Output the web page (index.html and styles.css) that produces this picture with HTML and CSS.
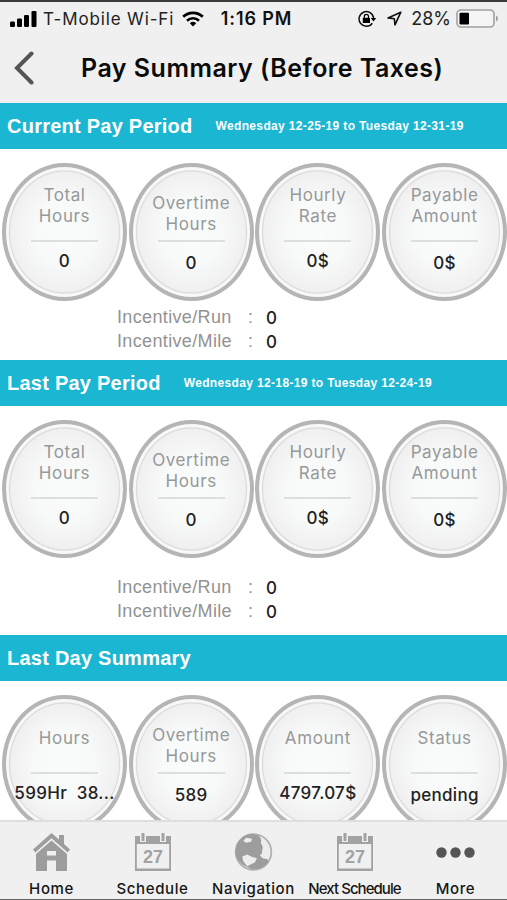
FILE: index.html
```html
<!DOCTYPE html>
<html lang="en">
<head>
    <meta charset="UTF-8">
    <meta name="viewport" content="width=device-width, initial-scale=1.0">
    <title>Pay Summary</title>
    <link rel="stylesheet" href="styles.css">
</head>
<body>
    <div class="app">
        <div class="status-bar">
            <div class="status-left">
                <svg class="signal" width="27" height="16" viewBox="0 0 27 16">
                    <rect x="0" y="10.5" width="5" height="5.5" rx="1.2"/>
                    <rect x="7" y="7.5" width="5" height="8.5" rx="1.2"/>
                    <rect x="14" y="4" width="5" height="12" rx="1.2"/>
                    <rect x="21.5" y="0" width="5" height="16" rx="1.2"/>
                </svg>
                <span class="carrier">T-Mobile Wi-Fi</span>
                <svg class="wifi" width="22" height="16" viewBox="0 0 22 16">
                    <path d="M1.2 5.8a14 14 0 0 1 19.6 0" fill="none" stroke="#000" stroke-width="2.8"/>
                    <path d="M5 9.7a8.6 8.6 0 0 1 12 0" fill="none" stroke="#000" stroke-width="2.6"/>
                    <path d="M7.8 12.3a4.7 4.7 0 0 1 6.4 0L11 15.6z"/>
                </svg>
            </div>
            <div class="clock">1:16 PM</div>
            <div class="status-right">
                <svg width="19" height="18" viewBox="0 0 19 18">
                    <path d="M14.3 13.2A7.3 7.3 0 1 1 15.6 8" fill="none" stroke="#111" stroke-width="1.5"/>
                    <path d="M12.8 8h5.4l-2.7 3.4z"/>
                    <rect x="4.8" y="7.8" width="7.2" height="5.2" rx=".6"/>
                    <path d="M6.3 8V6.5a2.1 2.1 0 0 1 4.2 0V8" fill="none" stroke="#000" stroke-width="1.2"/>
                </svg>
                <svg class="location" width="15" height="15" viewBox="0 0 15 15">
                    <path d="M13.8 1.2L1 6.9l6.3.8.7 6.2z" fill="none" stroke="#111" stroke-width="1.6" stroke-linejoin="round"/>
                </svg>
                <span class="percent">28%</span>
                <svg class="battery" width="43" height="19" viewBox="0 0 43 19">
                    <rect x="1" y="1" width="37" height="17" rx="4" fill="#f5f5f5" stroke="#a0a0a0" stroke-width="1.6"/>
                    <rect x="3.5" y="3.8" width="9.5" height="11.6" rx="1"/>
                    <path d="M40 6.5c2.6.8 2.6 5.2 0 6z" fill="#a0a0a0"/>
                </svg>
            </div>
        </div>

        <div class="nav-bar">
            <svg class="back" width="21" height="34" viewBox="0 0 21 34">
                <path d="M18.5 2.5L4 17l14.5 14.5" fill="none" stroke="#555" stroke-width="4" stroke-linecap="round"/>
            </svg>
            <h1>Pay Summary (Before Taxes)</h1>
        </div>

        <div class="content">
            <div class="section-head">
                <h2>Current Pay Period</h2>
                <span class="dates">Wednesday 12-25-19 to Tuesday 12-31-19</span>
            </div>
            <div class="circles">
                <div class="circle"><div class="label">Total<br>Hours</div><div class="value">0</div></div>
                <div class="circle low"><div class="label">Overtime<br>Hours</div><div class="value">0</div></div>
                <div class="circle"><div class="label">Hourly<br>Rate</div><div class="value">0$</div></div>
                <div class="circle last"><div class="label">Payable<br>Amount</div><div class="value">0$</div></div>
            </div>
            <div class="incentives">
                <span>Incentive/Run</span><span>:</span><b>0</b>
                <span>Incentive/Mile</span><span>:</span><b>0</b>
            </div>

            <div class="section-head">
                <h2>Last Pay Period</h2>
                <span class="dates">Wednesday 12-18-19 to Tuesday 12-24-19</span>
            </div>
            <div class="circles">
                <div class="circle"><div class="label">Total<br>Hours</div><div class="value">0</div></div>
                <div class="circle low"><div class="label">Overtime<br>Hours</div><div class="value">0</div></div>
                <div class="circle"><div class="label">Hourly<br>Rate</div><div class="value">0$</div></div>
                <div class="circle last"><div class="label">Payable<br>Amount</div><div class="value">0$</div></div>
            </div>
            <div class="incentives spaced">
                <span>Incentive/Run</span><span>:</span><b>0</b>
                <span>Incentive/Mile</span><span>:</span><b>0</b>
            </div>

            <div class="section-head">
                <h2>Last Day Summary</h2>
            </div>
            <div class="circles">
                <div class="circle single"><div class="label">Hours</div><div class="value">599Hr&nbsp; 38...</div></div>
                <div class="circle low"><div class="label">Overtime<br>Hours</div><div class="value">589</div></div>
                <div class="circle single"><div class="label">Amount</div><div class="value">4797.07$</div></div>
                <div class="circle single last"><div class="label">Status</div><div class="value">pending</div></div>
            </div>
        </div>

        <div class="tab-bar">
            <div class="tab">
                <svg width="37" height="38" viewBox="0 0 37 38" fill="#9d9d9d">
                    <path d="M18.5 0L26 6.5V2h5v9l6 5.5-2.3 3L18.5 5.3 2.3 19.5 0 16.5z"/>
                    <path fill-rule="evenodd" d="M18.5 7.5L34 21v17H23V27.5h-9V38H3V21zM14 18v4.5h9V18z"/>
                </svg>
                <span>Home</span>
            </div>
            <div class="tab">
                <svg width="36" height="38" viewBox="0 0 36 38">
                    <path d="M0 3h5v6h6V3h14v6h6V3h5v35H0zM1.8 11v24.5h32.4V11z" fill="#a2a2a2" fill-rule="evenodd"/>
                    <path d="M8 0v8M28 0v8" stroke="#a2a2a2" stroke-width="3"/>
                    <text x="18" y="30" text-anchor="middle" class="day-number">27</text>
                </svg>
                <span>Schedule</span>
            </div>
            <div class="tab">
                <svg width="39" height="38" viewBox="0 0 39 39">
                    <circle cx="19.5" cy="19.5" r="18.3" fill="#ededed" stroke="#b0b0b0" stroke-width="1.8"/>
                    <path fill-rule="evenodd" d="M2 13C4 7 10 2 17 1l7 1c3 2 4 5 3 8l2 4-1 7-2 2 3 3 5 1 1 3c-4 5-11 8-18 7l-6-3C5 31 1 25 1 19zM12 5l-3 3 3 2 5-1 1-3zM8 24l1 5 4 5 8-4 2-4-6-2-4-2z" fill="#9d9d9d"/>
                </svg>
                <span>Navigation</span>
            </div>
            <div class="tab">
                <svg width="36" height="38" viewBox="0 0 36 38">
                    <path d="M0 3h5v6h6V3h14v6h6V3h5v35H0zM1.8 11v24.5h32.4V11z" fill="#a2a2a2" fill-rule="evenodd"/>
                    <path d="M8 0v8M28 0v8" stroke="#a2a2a2" stroke-width="3"/>
                    <text x="18" y="30" text-anchor="middle" class="day-number">27</text>
                </svg>
                <span class="condensed">Next Schedule</span>
            </div>
            <div class="tab">
                <svg width="39" height="38" viewBox="0 0 39 38" fill="#555">
                    <circle cx="5.5" cy="19.5" r="5.2"/>
                    <circle cx="19.5" cy="19.5" r="5.2"/>
                    <circle cx="33.5" cy="19.5" r="5.2"/>
                </svg>
                <span>More</span>
            </div>
        </div>
    </div>
</body>
</html>
```
FILE: styles.css
```css
* {
    box-sizing: border-box;
}
body {
    margin: 0;
    font-family: Inter, Roboto, Arial, sans-serif;
    background: #fff;
    color: #222;
}
.app {
    display: flex;
    flex-direction: column;
    height: 900px;
    overflow: hidden;
    border-top: 2px solid #3d393b;
    border-bottom: 1px solid #666;
}
.status-bar {
    display: grid;
    grid-template-columns: 200px 93px 1fr;
    align-items: center;
    flex: none;
    height: 33px;
    padding: 0 8px 0 10px;
    background: #f0f0f0;
    font-size: 17px;
    color: #222;
}
.status-left,
.status-right {
    display: flex;
    align-items: center;
    white-space: nowrap;
}
.carrier {
    margin: 0 8px 0 6px;
    letter-spacing: 0.85px;
}
.clock {
    font-size: 18px;
    font-weight: 600;
    letter-spacing: 0.9px;
    text-align: center;
    color: #111;
    white-space: nowrap;
}
.status-right {
    justify-content: flex-end;
}
.location {
    margin: 0 9px 0 10px;
}
.percent {
    font-size: 18px;
}
.battery {
    margin-left: 5px;
}
.nav-bar {
    display: flex;
    align-items: center;
    flex: none;
    height: 68px;
    padding: 0 0 2px 13px;
    background: #f0f0f0;
}
.nav-bar h1 {
    margin: 0 0 0 47px;
    font-size: 25px;
    font-weight: 600;
    letter-spacing: 0.5px;
    color: #0b0b0b;
    white-space: nowrap;
}
.content {
    flex: 1;
    min-height: 0;
    overflow: hidden;
}
.section-head {
    display: flex;
    align-items: center;
    height: 45.5px;
    padding: 1px 0 0 7px;
    background: #1bb6d1;
    color: #fff;
    font-family: "Liberation Sans", Arial, sans-serif;
    white-space: nowrap;
}
.section-head h2 {
    margin: 0;
    font-size: 20px;
    font-weight: 700;
    letter-spacing: 0.24px;
}
.dates {
    margin-left: 23px;
    font-size: 12px;
    font-weight: 700;
    letter-spacing: 0.35px;
}
.circles {
    display: grid;
    grid-template-columns: repeat(4, 125px);
    column-gap: 1.7px;
    padding: 14px 0 0 2px;
}
.circle {
    height: 138px;
    padding-top: 18px;
    border: 4px solid #b5b5b5;
    border-radius: 50%;
    background: radial-gradient(closest-side, #fafbfb 0, #f8f9f9 50%, #f0f0f0 92%, #dadada 94%, #f8f8f8 96%);
    text-align: center;
}
.label {
    height: 56px;
    font-size: 17px;
    line-height: 21px;
    letter-spacing: 0.6px;
    color: #969999;
}
.label::after {
    content: "";
    display: block;
    width: 67px;
    height: 2px;
    margin: 13px auto 0;
    background: #dcdfdf;
}
.value {
    width: 105px;
    margin: 0 auto;
    padding-top: 10px;
    font-size: 17px;
    font-weight: 500;
    line-height: 21px;
    letter-spacing: 0.3px;
    color: #222;
    white-space: nowrap;
}
.low {
    padding-top: 26px;
}
.low .label {
    height: 48px;
}
.low .label::after {
    margin-top: 5px;
}
.low .value,
.last .value {
    padding-top: 12px;
}
.single {
    padding-top: 29px;
}
.single .label {
    height: 45px;
}
.single .label::after {
    margin-top: 23px;
}
.incentives {
    display: grid;
    grid-template-columns: 131px 18px 20px;
    grid-auto-rows: 24px;
    align-items: center;
    height: 59.5px;
    padding: 5px 0 0 117px;
    font-family: "Liberation Sans", Arial, sans-serif;
    font-size: 18px;
    letter-spacing: 0.35px;
    color: #929292;
}
.incentives b {
    font-family: Inter, sans-serif;
    font-size: 17px;
    font-weight: 500;
    color: #222;
}
.incentives.spaced {
    height: 77.5px;
    padding-top: 18px;
}
.tab-bar {
    display: grid;
    grid-template-columns: repeat(5, 101px);
    flex: none;
    height: 79px;
    padding: 11px 0 0 1px;
    border-top: 2px solid #dedede;
    background: #f0f0f0;
}
.tab {
    display: flex;
    flex-direction: column;
    align-items: center;
    font-size: 15px;
    font-weight: 500;
    color: #161616;
    white-space: nowrap;
}
.tab svg {
    height: 38px;
}
.tab span {
    margin-top: 9px;
    line-height: 18px;
    letter-spacing: 0.6px;
}
.tab .condensed {
    letter-spacing: -0.95px;
}
.day-number {
    font-family: "Liberation Sans", Arial, sans-serif;
    font-size: 18px;
    font-weight: 700;
    fill: #a2a2a2;
}
```
